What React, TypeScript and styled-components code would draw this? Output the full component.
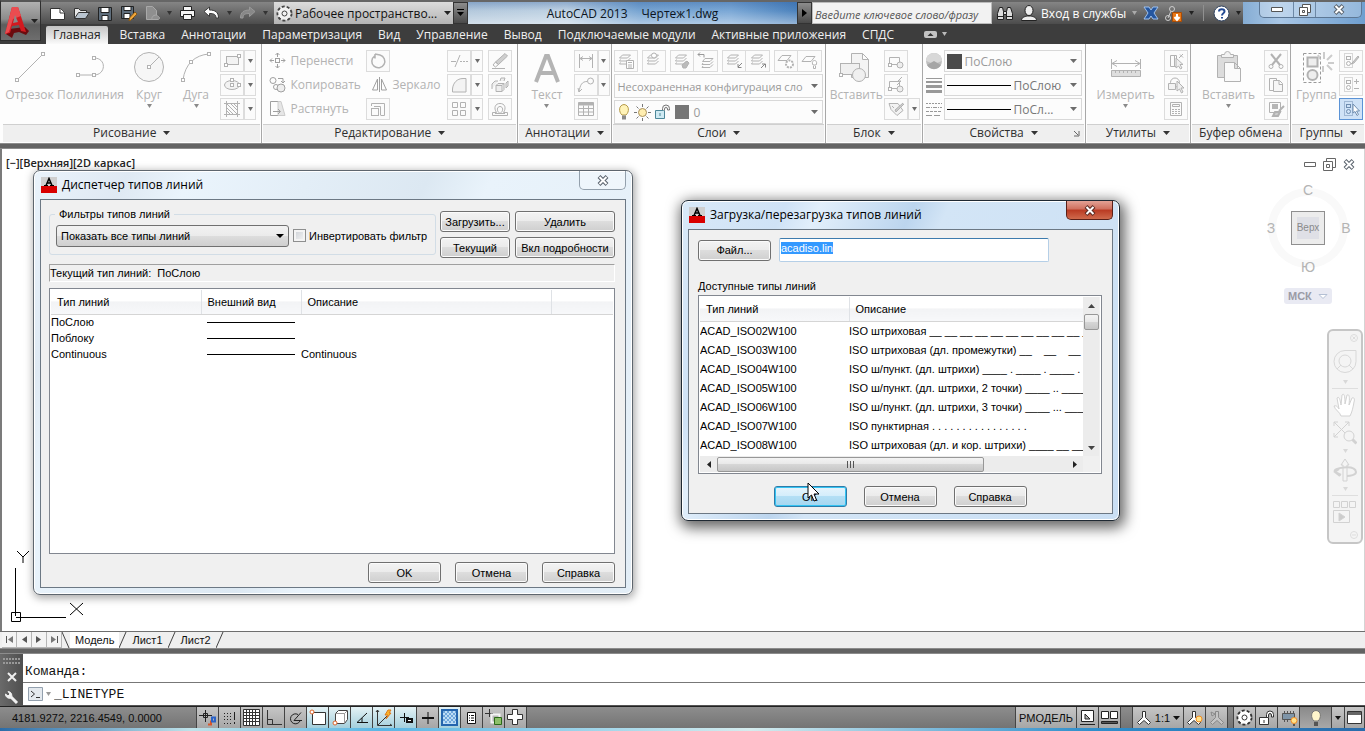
import React, { useEffect, useRef } from "react";
import styled, { createGlobalStyle, css } from "styled-components";

const uiFont = `"Open Sans", "Noto Sans", sans-serif`;
const dialogFont = `"Liberation Sans", Arial, sans-serif`;

const GlobalStyle = createGlobalStyle`
  *, *::before, *::after { box-sizing: border-box; }
  body { margin: 0; background: #fff; font-family: ${uiFont}; font-size: 12px; color: #2b2b2b; }
  button, input, select { font: inherit; color: inherit; margin: 0; border-radius: 0; }
  button { padding: 0; border: 0; background: none; }
  svg { display: block; flex: none; }
`;

/* ---------- drawing helpers ---------- */

type DrawProps = {
  w?: number;
  h?: number;
  color?: string;
  fill?: string;
  sw?: number;
  children: React.ReactNode;
};

const Draw = ({ w = 18, h = 18, color = "#b2b2b2", fill = "none", sw = 1, children }: DrawProps) => (
  <svg width={w} height={h} viewBox={`0 0 ${w} ${h}`} fill={fill} stroke={color} strokeWidth={sw} aria-hidden="true">
    {children}
  </svg>
);

const Arrow = ({ color = "#6c6c6c", w = 7 }: { color?: string; w?: number }) => (
  <svg width={w} height={4} viewBox="0 0 8 4" preserveAspectRatio="none" fill={color} aria-hidden="true">
    <path d="M0 0h8L4 4z" />
  </svg>
);

const node = (x: number, y: number) => <rect key={`${x}-${y}`} x={x - 1.5} y={y - 1.5} width="3" height="3" fill="#fff" />;

/* ---------- page frame ---------- */

const Page = styled.div`
  display: flex;
  flex-direction: column;
  min-height: 100vh;
  overflow: hidden;
`;

const Header = styled.header`
  display: flex;
  align-items: flex-start;
  height: 44px;
  background: #3d3d3d;
`;

const AppButton = styled.button`
  display: flex;
  align-items: center;
  justify-content: center;
  gap: 2px;
  width: 41px;
  height: 41px;
  border: 1px solid #2e2e2e;
  border-top: 2px solid #555;
  background: linear-gradient(#b0b0b0, #8c8c8c 45%, #5d5d5d 60%, #6e6e6e);
`;

const HeaderRows = styled.div`
  flex: 1;
  min-width: 0;
`;

const TitleBar = styled.div`
  display: flex;
  height: 24px;
  border-top: 2px solid #666;
  background: linear-gradient(#858585, #4c4c4c);
`;

const QuickAccess = styled.div`
  display: flex;
  align-items: center;
  gap: 7px;
  width: 233px;
  padding-left: 8px;
`;

const IconButton = styled.button`
  display: flex;
  align-items: center;
`;

const WorkspaceBox = styled.div`
  display: flex;
  align-items: center;
  gap: 2px;
  width: 179px;
  padding: 0 2px;
  background: linear-gradient(#dcdcdc, #b4b4b4);
  color: #111;
`;

const BareSelect = styled.select`
  flex: 1;
  min-width: 0;
  height: 100%;
  padding: 0;
  border: 0;
  outline: 0;
  appearance: none;
  background: transparent;
  overflow: hidden;
  text-overflow: clip;
`;

const DarkStub = styled.button`
  display: flex;
  align-items: center;
  justify-content: center;
  width: 15px;
  border: 1px solid #333;
  background: linear-gradient(#8c8c8c, #4a4a4a);
`;

const Glass = styled.div`
  display: flex;
  align-items: center;
  justify-content: center;
  flex: 1;
  gap: 14px;
  color: #0c1420;
  background:
    linear-gradient(rgba(30, 80, 150, 0.3), rgba(255, 255, 255, 0) 40%, rgba(255, 255, 255, 0.4)),
    linear-gradient(90deg, #b4c9dc, #c0d3e4 30%, #78a5d2 52%, #7ba8d6 80%, #4d83bd);
`;

const SearchInput = styled.input`
  width: 180px;
  padding: 3px 2px 0;
  border: 1px solid #bbb;
  outline: 0;
  background: #f2f2f2;
  font-size: 11px;
  font-style: italic;
  &::placeholder { color: #555; opacity: 1; }
`;

const InfoBar = styled.div`
  display: flex;
  align-items: center;
  gap: 6px;
  width: 251px;
  padding-left: 4px;
  color: #fff;
  white-space: nowrap;
`;

const VRule = styled.span`
  width: 1px;
  height: 16px;
  margin: 0 3px;
  background: #909090;
`;

const WindowGlass = styled.div`
  width: 122px;
  padding: 0 3px 5px 16px;
  background: linear-gradient(90deg, #86add4, #a9c7e6 30%, #6f9fd0);
`;

const WindowButtons = styled.div`
  display: flex;
  height: 16px;
  border: 1px solid #5d7896;
  border-top: 0;
  border-radius: 0 0 5px 5px;
  background: rgba(255, 255, 255, 0.25);
`;

const WindowButton = styled.button<{ $grow: number }>`
  display: flex;
  flex: ${(p) => p.$grow} 1 0;
  align-items: center;
  justify-content: center;
  & + & { border-left: 1px solid #6d88a6; }
`;

/* ---------- ribbon tabs ---------- */

const Tabs = styled.nav`
  display: flex;
  align-items: center;
  height: 20px;
  padding-left: 5px;
  color: #f0f0f0;
`;

const Tab = styled.button<{ $active?: boolean }>`
  height: 20px;
  padding: 1px 8px 0;
  line-height: 18px;
  white-space: nowrap;
  border-radius: 2px 2px 0 0;
  ${(p) =>
    p.$active &&
    css`
      height: 18px;
      padding: 0 7px;
      margin: 2px 4px 0 0;
      line-height: 16px;
      color: #222;
      background: linear-gradient(#c4c4c4, #fafafa);
    `}
`;

const TabExtras = styled.button`
  display: flex;
  align-items: center;
  gap: 5px;
  margin-left: 22px;
`;

/* ---------- ribbon ---------- */

const Ribbon = styled.section`
  display: flex;
  height: 99px;
  padding-left: 2px;
  background: #fdfdfd;
`;

const PanelBox = styled.div<{ $grow: number }>`
  display: flex;
  flex-direction: column;
  flex: ${(p) => p.$grow} 1 0;
  min-width: 0;
  border-right: 1px solid #a8a8a8;
  &:last-child { border-right: 0; }
`;

const PanelBody = styled.div`
  display: flex;
  flex: 1;
  padding: 6px 0 0 2px;
  color: #b3b3b3;
`;

const PanelTitle = styled.button`
  display: flex;
  align-items: center;
  justify-content: center;
  gap: 7px;
  height: 18px;
  margin: 0 1px 1px;
  padding-bottom: 2px;
  border-top: 1px solid #cfcfcf;
  background: #efefef;
  color: #2e2e2e;
  white-space: nowrap;
  position: relative;
`;

const Launcher = styled.span`
  position: absolute;
  right: 4px;
  top: 5px;
`;

const BigButton = styled.button<{ $w: number }>`
  display: flex;
  flex-direction: column;
  align-items: center;
  width: ${(p) => p.$w}px;
  height: 62px;
  line-height: 18px;
  white-space: nowrap;
`;

const BigLabel = styled.span`
  display: flex;
  justify-content: center;
  width: 0;
`;

const SmallColumn = styled.div<{ $w?: number }>`
  display: flex;
  flex-direction: column;
  gap: 2px;
  width: ${(p) => (p.$w ? `${p.$w}px` : "auto")};
`;

const SmallRow = styled.div<{ $gap?: number }>`
  display: flex;
  align-items: center;
  gap: ${(p) => p.$gap ?? 0}px;
  height: 22px;
`;

const ToolButton = styled.button<{ $on?: boolean; $w?: number }>`
  display: flex;
  align-items: center;
  justify-content: center;
  width: ${(p) => p.$w ?? 24}px;
  height: 22px;
  border: 1px solid ${(p) => (p.$on ? "#5b93d6" : "#dcdcdc")};
  background: ${(p) => (p.$on ? "#cfe2f7" : "#fbfbfb")};
  & + &[data-joined] { border-left: 0; }
`;

const TextTool = styled.button`
  display: flex;
  align-items: center;
  gap: 4px;
  height: 22px;
  padding: 0 0 2px 5px;
  white-space: nowrap;
`;

const Combo = styled.div<{ $color?: string; $small?: boolean }>`
  display: flex;
  align-items: center;
  gap: 3px;
  flex: 1;
  min-width: 0;
  height: 22px;
  padding: 0 4px 0 2px;
  border: 1px solid #d8d8d8;
  background: #fcfcfc;
  color: ${(p) => p.$color ?? "#9a9a9a"};
  font-size: ${(p) => (p.$small ? 11 : 12)}px;
`;

const Swatch = styled.span`
  width: 15px;
  height: 15px;
  background: #4b4b4b;
`;

const LineSample = styled.span<{ $w: number }>`
  width: ${(p) => p.$w}px;
  height: 1px;
  background: #000;
`;

const DarkBar = styled.div`
  height: 6px;
  border-top: 1px solid #8c8c8c;
  border-bottom: 1px solid #8c8c8c;
  background: #636363;
`;

const Panel = ({
  title,
  grow,
  menu = true,
  launcher,
  children,
}: {
  title: string;
  grow: number;
  menu?: boolean;
  launcher?: boolean;
  children: React.ReactNode;
}) => (
  <PanelBox $grow={grow}>
    <PanelBody>{children}</PanelBody>
    <PanelTitle>
      {title}
      {menu && <Arrow color="#333" />}
      {launcher && (
        <Launcher>
          <Draw w={7} h={7} color="#666">
            <path d="M1 1l4 4M6 1v5h-5" />
          </Draw>
        </Launcher>
      )}
    </PanelTitle>
  </PanelBox>
);

const Big = ({ label, w, arrow, children }: { label: string; w: number; arrow?: boolean; children: React.ReactNode }) => (
  <BigButton $w={w}>
    {children}
    <BigLabel>{label}</BigLabel>
    {arrow && <Arrow color="#8a8a8a" w={5} />}
  </BigButton>
);

const Split = ({ label, children }: { label: string; children: React.ReactNode }) => (
  <SmallRow>
    <ToolButton aria-label={label}>{children}</ToolButton>
    <ToolButton data-joined $w={12} aria-label={`${label}: меню`}>
      <Arrow w={5} />
    </ToolButton>
  </SmallRow>
);

/* ---------- ribbon drawings ---------- */

const LineIcon = () => (
  <Draw w={36} h={36}>
    <path d="M5 30L31 4" />
    {node(5, 30)}
    {node(31, 4)}
  </Draw>
);
const PolylineIcon = () => (
  <Draw w={36} h={36}>
    <path d="M5 25h16c12 0 13-17 0-17" />
    {node(5, 25)}
    {node(21, 25)}
    {node(21, 8)}
  </Draw>
);
const CircleIcon = () => (
  <Draw w={36} h={36}>
    <circle cx="18" cy="17" r="14.5" fill="#f6f6f6" />
    <path d="M18 17L28 7" />
    {node(18, 17)}
  </Draw>
);
const ArcIcon = () => (
  <Draw w={36} h={36}>
    <path d="M5 30C7 14 17 5 31 4" />
    {node(5, 30)}
    {node(13, 12)}
    {node(31, 4)}
  </Draw>
);
const RectIcon = () => (
  <Draw>
    <rect x="3.5" y="4.5" width="12" height="8" fill="#f3f3f3" />
    {node(3, 13)}
    {node(16, 4)}
  </Draw>
);
const EllipseIcon = () => (
  <Draw>
    <ellipse cx="9" cy="9" rx="7.5" ry="4.5" fill="#f3f3f3" />
    {node(9, 9)}
    {node(16, 9)}
    {node(9, 4)}
  </Draw>
);
const HatchIcon = () => (
  <Draw>
    <path d="M1 3.500h16M3.500 1v16M1 14.500h16M14.500 1v16" />
    <path d="M4 4l10 10M8 4l6 6M4 8l6 6M11 4l3 3M4 11l3 3" />
  </Draw>
);
const MoveIcon = () => (
  <Draw w={17} h={17} color="#a0a0a0">
    <rect x="6.500" y="6.500" width="4" height="4" />
    <path d="M8.500 5V1M6.500 3l2-2 2 2M8.500 12v4M6.500 14l2 2 2-2M5 8.500H1M3 6.500l-2 2 2 2M12 8.500h4M14 6.500l2 2-2 2" />
  </Draw>
);
const CopyIcon = () => (
  <Draw w={17} h={17} color="#a0a0a0">
    <circle cx="4" cy="4.500" r="3" />
    <circle cx="7" cy="11" r="2.500" />
    <circle cx="12" cy="12" r="4" fill="#eee" />
    <path d="M9 2.500h5v4M12 5l2 2 2-2" />
  </Draw>
);
const StretchIcon = () => (
  <Draw w={17} h={17} color="#a0a0a0">
    <path d="M9 1.500H1.500v14H9" />
    <path d="M9 1.500h3l4 14H9z" fill="#e6e6e6" stroke="#ccc" />
    <path d="M4 11.500h7M9 9l2.500 2.500L9 14" />
  </Draw>
);
const RotateIcon = () => (
  <Draw>
    <path d="M5.500 4A6.500 6.500 0 1 0 11 3M11 3L6 2M6 2v4.500" strokeWidth="1.500" />
  </Draw>
);
const MirrorIcon = () => (
  <Draw w={17} h={17} color="#a0a0a0">
    <path d="M6.500 3v11h-5zM10.500 3v11h5zM8.500 1v15" />
  </Draw>
);
const ScaleIcon = () => (
  <Draw>
    <rect x="2.500" y="8.500" width="7" height="7" />
    <path d="M2.500 6V3.500h13v12H12M5 6.500h6.500v9" />
  </Draw>
);
const TrimIcon = () => (
  <Draw>
    <path d="M1 9.500h5M5 15L10 3M10 9.500h2M13 9.500h2M16 9.500h2" />
  </Draw>
);
const FilletIcon = () => (
  <Draw>
    <path d="M2.500 16V13C3 7 7 2.500 13 2.500h3v13.500z" fill="#f3f3f3" />
  </Draw>
);
const ArrayIcon = () => (
  <Draw>
    <path d="M2.500 2.500h5v5h-5zM10.500 2.500h5v5h-5zM2.500 10.500h5v5h-5zM10.500 10.500h5v5h-5z" />
  </Draw>
);
const EraseIcon = () => (
  <Draw>
    <path d="M14 1.500l2.500 2.500-9 8.500-3-2.500z" fill="#cfcfcf" />
    <path d="M4.500 10l3 2.500-3 2.500-2.500-2z" />
    <path d="M1 16.500h13" />
  </Draw>
);
const ExplodeIcon = () => (
  <Draw>
    <path d="M5 9.500h6v6H5zM5 9.500l2-2h6l-2 2M13 7.500v6l-2 2M1 13V8l3-3h3M9 5l1-3h4l-1 3M15 12V7l2-2v5z" fill="#eee" />
  </Draw>
);
const OffsetIcon = () => (
  <Draw>
    <path d="M1.500 15.500v-3h4C2.500 8 4 3.500 9 3.500S15.500 8 12.500 12.500h4v3z" />
    <path d="M4 13.500h5C5 11 6 6.500 9 6.500s4 4.500 0 7h5" />
  </Draw>
);
const DimIcon = () => (
  <Draw>
    <path d="M2.500 2v14M15.500 2v14M3 6.500h12M6 4.500l-3 2 3 2M12 4.500l3 2-3 2" />
  </Draw>
);
const LeaderIcon = () => (
  <Draw>
    <path d="M2 16C3 9 5 5.500 10 5.500M1 12l1 4 3-3" />
    <circle cx="13.500" cy="5" r="3" />
  </Draw>
);
const TableIcon = () => (
  <Draw>
    <path d="M1.500 2.500h15v13h-15zM1.500 8.500h15M1.500 12h15M6.500 5.500v10M11.500 5.500v10" />
    <path d="M1.500 4h15" strokeWidth="3" />
  </Draw>
);
const TextIcon = () => (
  <Draw w={36} h={36} color="#b4b4b4">
    <path d="M7 32L17 6h2l10 26M11 23h14" strokeWidth="4" />
  </Draw>
);

const Layers = ({ extra }: { extra?: React.ReactNode }) => (
  <Draw>
    <path d="M5.500 3h8l-3 3h-8zM3.500 7.500L2.500 9h8l3-3M3.500 10.500L2.500 12h8l3-3" />
    {extra}
  </Draw>
);
const BigInsertIcon = () => (
  <Draw w={36} h={36}>
    <path d="M13.500 3.500h11l6 6v18H13.500zM24.500 3.500v6h6" fill="#f4f4f4" />
    <rect x="2.500" y="13.500" width="19" height="11" fill="#f0f0f0" />
    <circle cx="21" cy="25" r="6.500" fill="#f0f0f0" />
    {node(3, 25)}
  </Draw>
);
const BlockIcon = ({ extra }: { extra?: React.ReactNode }) => (
  <Draw>
    <path d="M2.500 5.500h10v7h-10z" />
    <circle cx="13" cy="13" r="3" fill="#eee" />
    {node(3, 13)}
    {extra}
  </Draw>
);
const MeasureIcon = () => (
  <Draw w={36} h={36}>
    <path d="M3.500 9v10M32.500 9v10M4 13.500h28M9 10.500l-5 3 5 3M27 10.500l5 3-5 3" />
    <path d="M3.500 20.500h29v6h-29z" fill="#dedede" />
    <path d="M7.500 20v3M11.500 20v3M15.500 20v3M19.500 20v3M23.500 20v3M27.500 20v3" />
  </Draw>
);
const PasteIcon = () => (
  <Draw w={36} h={36}>
    <path d="M6.500 5.500h20v22h-20z" fill="#dcdcdc" />
    <path d="M10.500 7.500v-3h3a3 3 0 0 1 6 0h3v3z" fill="#f2f2f2" />
    <path d="M13.500 12.500h10l6 6v13h-16zM23.500 12.500v6h6" fill="#fafafa" />
  </Draw>
);
const GroupIcon = () => (
  <Draw w={36} h={36}>
    <path d="M5.500 3.500h17v29h-17z" strokeDasharray="3 2" stroke="#999" />
    <rect x="9.500" y="7.500" width="10" height="9" strokeWidth="2" fill="#eee" />
    <circle cx="14.500" cy="25" r="5" strokeWidth="2" fill="#eee" />
    <path d="M26 9V2M29 10l5-5M30 13h6M29 15l5 5M25 16v6M22 9l-2-4" stroke="#ccc" strokeWidth="2" />
  </Draw>
);
const SelectIcon = () => (
  <Draw>
    <path d="M3.500 3.500h6v11h-6zM7.500 3.500v11M12 6l4-4M13 2.500l3 3" />
    <path d="M9 6v10l2.500-2 2 3 1.500-1-2-3.500h3z" fill="#eee" />
  </Draw>
);
const CalcIcon = () => (
  <Draw>
    <path d="M3.500 2.500h11v13h-11zM5.500 4.500h7v2h-7z" />
    <path d="M5 9.500h8M5 11.500h8M5 13.500h8" strokeDasharray="2 1" />
  </Draw>
);
const CutIcon = () => (
  <Draw>
    <path d="M4 2l9 11M14 2L5 13" strokeWidth="2" />
    <circle cx="4" cy="14.500" r="2" />
    <circle cx="14" cy="14.500" r="2" />
  </Draw>
);
const CopyPageIcon = () => (
  <Draw>
    <path d="M2.500 2.500h7v12h-7z" />
    <path d="M6.500 4.500h6l3 3v8h-9zM12 4.500v4h4" fill="#f6f6f6" />
  </Draw>
);
const MatchIcon = () => (
  <Draw>
    <path d="M2.500 2.500h11v10h-11z" />
    <rect x="5" y="4" width="6" height="5" fill="#b5b5b5" stroke="none" />
    <path d="M17 6l-5 5M8 12h5l-2 4H6z" fill="#ccc" strokeWidth="2" />
  </Draw>
);
const GroupSmall = ({ extra, color }: { extra: React.ReactNode; color?: string }) => (
  <Draw color={color}>
    <path d="M2.500 1.500h8v14h-8z" strokeDasharray="1 1" />
    <rect x="4.500" y="4.500" width="4" height="3" />
    <circle cx="6.500" cy="11.500" r="2" />
    {extra}
  </Draw>
);
const BulbIcon = () => (
  <Draw w={14} h={18} color="#b59a4a">
    <path d="M5 12C1.500 9 1.500 2 7 1.500 12.500 2 12.500 9 9 12z" fill="#fff3b8" />
    <path d="M5 13.500h4M5 15.500h4" stroke="#8a8a8a" strokeWidth="2" />
  </Draw>
);
const SunIcon = () => (
  <Draw w={17} h={17} color="#777">
    <path d="M8.500 0v3M8.500 14v3M0 8.500h3M14 8.500h3M2.500 2.500l2 2M12.500 12.500l2 2M14.500 2.500l-2 2M4.500 12.500l-2 2" />
    <circle cx="8.500" cy="8.500" r="4" fill="#ffeeb0" stroke="#a9905a" />
  </Draw>
);
const LockIcon = () => (
  <Draw w={17} h={16} color="#4d8799">
    <path d="M1.500 6.500h9v8h-9z" fill="#cfeaf3" />
    <path d="M8.500 6V4.500a3.500 3.500 0 0 1 7 0V6h-2V5a1.500 1.500 0 0 0-3 0v1.500" fill="#f4f4f4" stroke="#777" />
    <path d="M6 9v3" />
  </Draw>
);

/* ---------- drawing area ---------- */

const Canvas = styled.main`
  position: relative;
  flex: 1;
  min-height: 482px;
  border-left: 2px solid #7b7b7b;
  border-right: 1px solid #d4d4d4;
  background: #fff;
`;

const ViewLabel = styled.div`
  padding: 7px 4px;
  font-size: 11px;
  font-weight: 600;
  line-height: 14px;
  color: #222;
`;

const ViewTools = styled.div`
  position: absolute;
  top: 7px;
  right: 0;
  width: 104px;
`;

const ViewControls = styled.div`
  display: flex;
  align-items: center;
  justify-content: flex-end;
  gap: 7px;
  height: 17px;
  padding-right: 9px;
`;

const CubeWrap = styled.div`
  width: 90px;
  height: 94px;
  margin-top: 8px;
`;

const WcsButton = styled.button`
  display: flex;
  align-items: center;
  gap: 6px;
  height: 16px;
  margin: 13px 0 25px 24px;
  padding: 0 4px;
  border-radius: 3px;
  background: #e9eaf3;
  color: #9b9ba6;
  font: 600 11px/16px ${dialogFont};
`;

const NavBar = styled.div`
  display: flex;
  flex-direction: column;
  align-items: center;
  gap: 4px;
  width: 36px;
  height: 215px;
  margin-left: 67px;
  padding: 3px 3px;
  border: 2px solid #c6c6c6;
  border-radius: 6px;
  background: #f4f4f4;
`;

const NavRule = styled.span`
  width: 26px;
  height: 1px;
  flex: none;
  background: #dedede;
`;

const NavEnd = styled.button<{ $last?: boolean }>`
  align-self: flex-end;
  margin-top: ${(p) => (p.$last ? "auto" : "0")};
`;

const UcsMark = styled.div`
  position: absolute;
  left: 8px;
  bottom: 8px;
`;

/* ---------- dialogs ---------- */

const Dialog = styled.section<{ $x: number; $y: number; $w: number; $active?: boolean }>`
  position: absolute;
  left: ${(p) => p.$x}px;
  top: ${(p) => p.$y}px;
  width: ${(p) => p.$w}px;
  padding: 0 6px 6px;
  border: 1px solid ${(p) => (p.$active ? "#1f2933" : "#5e666e")};
  border-radius: 7px;
  color: #000;
  font: 11px/14px ${dialogFont};
  background: ${(p) =>
    p.$active
      ? "linear-gradient(115deg, #d9e9f8 0, #cfe2f6 18%, #e2effb 24%, #bcd5ee 40%, #d3e5f6 46%, #cadff4)"
      : "linear-gradient(115deg, #eaf3fb 0, #dfe9f3 12%, #eaf4fc 20%, #dce8f2 50%, #e9f3fb 58%, #e2edf6)"};
  box-shadow:
    inset 0 0 0 1px #fff,
    ${(p) => (p.$active ? "2px 4px 14px 3px rgba(0,0,0,.6)" : "1px 2px 8px 1px rgba(0,0,0,.35)")};
`;

const DialogHead = styled.div`
  display: flex;
  align-items: flex-start;
  justify-content: space-between;
  height: 28px;
`;

const DialogTitle = styled.h2`
  display: flex;
  align-items: center;
  gap: 5px;
  margin: 6px 0 0 1px;
  font: 12px/16px ${uiFont};
  white-space: nowrap;
`;

const CloseButton = styled.button<{ $red?: boolean }>`
  display: flex;
  align-items: center;
  justify-content: center;
  width: 47px;
  height: 19px;
  border: 1px solid ${(p) => (p.$red ? "#5a2018" : "#93a0ac")};
  border-top: 0;
  border-radius: 0 0 5px 5px;
  background: ${(p) => (p.$red ? "linear-gradient(#e3a295, #cf6f5d 45%, #b93a22 50%, #cf6a4c)" : "rgba(255,255,255,.35)")};
`;

const DialogBody = styled.div<{ $pad: string }>`
  display: flex;
  flex-direction: column;
  padding: ${(p) => p.$pad};
  border: 1px solid #6c7884;
  background: #f0f0f0;
`;

const DialogButton = styled.button<{ $w?: number; $hot?: boolean }>`
  width: ${(p) => p.$w ?? 73}px;
  height: 21px;
  border: 1px solid ${(p) => (p.$hot ? "#2f7ba8" : "#707070")};
  border-radius: 3px;
  background: ${(p) =>
    p.$hot ? "linear-gradient(#e6f4fc, #d3edfb 48%, #b3dff5 50%, #a5d6f0)" : "linear-gradient(#f3f3f3, #ebebeb 48%, #dddddd 50%, #cfcfcf)"};
  box-shadow: inset 0 0 0 1px ${(p) => (p.$hot ? "#33c4f3" : "#fbfbfb")};
  white-space: nowrap;
`;

const FilterRow = styled.div`
  display: flex;
  align-items: flex-start;
  gap: 4px;
`;

const Fieldset = styled.fieldset`
  display: flex;
  align-items: center;
  gap: 4px;
  flex: 1;
  height: 48px;
  margin: -4px 0 0;
  padding: 0 6px 4px;
  border: 1px solid #d2dde6;
  border-radius: 3px;
`;

const Legend = styled.legend`
  margin-left: -1px;
  padding: 0 4px;
`;

const DialogSelectBox = styled.div`
  display: flex;
  align-items: center;
  width: 233px;
  height: 22px;
  padding: 0 4px;
  border: 1px solid #707070;
  border-radius: 3px;
  background: linear-gradient(#f2f2f2, #ebebeb 48%, #dddddd 50%, #cfcfcf);
`;

const CheckLabel = styled.label`
  display: flex;
  align-items: center;
  gap: 3px;
  white-space: nowrap;
`;

const CheckBox = styled.input`
  width: 13px;
  height: 13px;
  appearance: none;
  border: 1px solid #8e8f8f;
  background: linear-gradient(135deg, #cbcfd5, #f6f6f6);
  box-shadow: inset 0 0 0 2px #f4f4f4;
`;

const ButtonGrid = styled.div`
  display: grid;
  grid-template-columns: 70px 100px;
  gap: 5px;
`;

const CurrentLine = styled.div`
  height: 18px;
  margin: 6px 0;
  padding-top: 1px;
  border: 1px solid #fff;
  border-top-color: #a0a0a0;
  border-left-color: #a0a0a0;
`;

const ListFrame = styled.div<{ $h: number }>`
  height: ${(p) => p.$h}px;
  padding: 1px;
  border: 1px solid #828790;
  background: #fff;
`;

const Table = styled.table<{ $row: number }>`
  width: 100%;
  table-layout: fixed;
  border-collapse: collapse;
  th {
    height: 24px;
    padding: 1px 0 0 6px;
    font-weight: normal;
    text-align: left;
    border-right: 1px solid #dfe2e6;
    border-bottom: 1px solid #d5d5d5;
    background: linear-gradient(#fff 45%, #f2f3f5 50%, #f7f8fa);
  }
  th:last-child { border-right: 0; }
  td {
    height: ${(p) => p.$row}px;
    padding: 0;
    overflow: hidden;
    white-space: pre;
  }
`;

const SampleLine = styled.span`
  display: block;
  width: 88px;
  height: 1px;
  margin-left: 6px;
  background: #000;
`;

const ButtonRow = styled.div<{ $gap: number; $justify: string; $top: number }>`
  display: flex;
  justify-content: ${(p) => p.$justify};
  gap: ${(p) => p.$gap}px;
  margin-top: ${(p) => p.$top}px;
`;

const FileRow = styled.div`
  display: flex;
  align-items: center;
  gap: 8px;
`;

const FileInput = styled.input`
  width: 270px;
  height: 24px;
  padding: 2px 1px 7px;
  border: 1px solid #b5cfe7;
  border-top-color: #3d7bad;
  border-radius: 2px;
  outline: 0;
  background: #fff;
  line-height: 13px;
  &::selection { background: #3399ff; color: #fff; }
`;

const ListLabel = styled.div`
  margin: 17px 0 2px;
`;

const ScrollGrid = styled.div`
  display: grid;
  grid-template-columns: minmax(0, 1fr) 16px;
  grid-template-rows: 159px 16px;
  padding-right: 1px;
  background: #f0f0f0;
`;

const ScrollView = styled.div`
  overflow: hidden;
  background: #fff;
`;

const VScroll = styled.div`
  display: flex;
  flex-direction: column;
  align-items: center;
  background: #ececec;
`;

const HScroll = styled.div`
  display: flex;
  align-items: center;
  background: #ececec;
`;

const ScrollArrow = styled.button<{ $push?: boolean }>`
  display: flex;
  flex: none;
  align-items: center;
  justify-content: center;
  width: 17px;
  height: 17px;
  margin: ${(p) => (p.$push ? "auto 0 0 auto" : "0")};
`;

const Thumb = styled.div<{ $w: number; $h: number }>`
  display: flex;
  flex: none;
  align-items: center;
  justify-content: center;
  width: ${(p) => p.$w}px;
  height: ${(p) => p.$h}px;
  border: 1px solid #979797;
  border-radius: 2px;
  background: linear-gradient(#f3f3f3, #e8e8e8 48%, #d6d6d6 50%, #c6c6c6);
`;

const Cursor = styled.div`
  position: absolute;
  left: 125px;
  top: 281px;
`;

/* ---------- sheet tabs, command line, status bar ---------- */

const SheetBar = styled.div`
  display: flex;
  height: 17px;
  padding-left: 2px;
  border-top: 1px solid #6e6e6e;
  background: #efefef;
  color: #111;
  font: 11px/16px ${dialogFont};
`;

const SheetNav = styled.button`
  display: flex;
  align-items: center;
  justify-content: center;
  width: 15px;
  border: 1px solid #b5b5b5;
  border-width: 0 1px 1px 0;
  background: #f3f3f3;
`;

const SheetTab = styled.button<{ $active?: boolean }>`
  height: 16px;
  padding: 0 5px;
  background: ${(p) => (p.$active ? "#fff" : "transparent")};
`;

const CommandArea = styled.section`
  display: flex;
  height: 52px;
  background: #fff;
`;

const CommandGrip = styled.div`
  display: flex;
  flex-direction: column;
  align-items: center;
  justify-content: space-between;
  width: 23px;
  padding: 4px 0 1px;
  background: linear-gradient(90deg, #6a6a6a, #4f4f4f);
`;

const CommandRows = styled.div`
  flex: 1;
  color: #111;
  font: 13px/16px "Liberation Mono", "Courier New", monospace;
`;

const CommandLog = styled.div`
  height: 29px;
  padding: 10px 2px 0;
  border-bottom: 1px solid #777;
`;

const CommandLine = styled.label`
  display: flex;
  align-items: center;
  gap: 3px;
  height: 23px;
  padding-left: 5px;
  border-bottom: 1px solid #555;
`;

const CommandInput = styled.input`
  flex: 1;
  height: 18px;
  padding: 0;
  border: 0;
  outline: 0;
  background: transparent;
`;

const StatusBar = styled.footer`
  display: flex;
  height: 22px;
  border-top: 1px solid #222;
  background: linear-gradient(#8d8d8d, #747474);
  color: #0c0c0c;
  font: 11px/20px ${dialogFont};
`;

const Coords = styled.div`
  width: 197px;
  padding-left: 12px;
  padding-top: 1px;
  border-right: 1px solid #444;
`;

const StatusButton = styled.button<{ $on?: boolean; $w?: number; $pressed?: boolean }>`
  display: flex;
  flex: none;
  align-items: center;
  justify-content: center;
  gap: 3px;
  width: ${(p) => p.$w ?? 22}px;
  border-right: 1px solid #444;
  white-space: nowrap;
  background: ${(p) =>
    p.$on ? "linear-gradient(#e4f2f5, #a4cfdc)" : p.$pressed ? "linear-gradient(#8a8a8a, #a8a8a8)" : "linear-gradient(#c6c6c6, #a6a6a6)"};
`;

const StatusSpacer = styled.span`
  flex: 1;
`;

const StatusGap = styled.span<{ $w: number }>`
  width: ${(p) => p.$w}px;
  border-right: 1px solid #444;
`;

const TaskStrip = styled.div`
  height: 3px;
  background: linear-gradient(90deg, #2b6ca8, #bfe3ea 14%, #59b6e4 28%, #d5ecee 55%, #2f8ecb 80%, #2a6cab);
`;

const AppLogo = () => (
  <svg width="16" height="16" viewBox="0 0 16 16" aria-hidden="true">
    <path fill="#cfcfcf" d="M0 0h16v16H0z" />
    <path fill="#d90000" d="M0 9h16v7H0z" />
    <path d="M5 8.500L8 1.500 11 8.500M6 6h4" stroke="#000" strokeWidth="1.500" fill="none" />
    <path d="M3 8.500h4M9 8.500h4" stroke="#000" />
  </svg>
);

const CloseX = ({ light }: { light?: boolean }) => (
  <svg width="12" height="11" viewBox="0 0 12 11" fill="none" aria-hidden="true">
    <path d="M2 1.500l8 8M10 1.500l-8 8" stroke={light ? "#5b2a22" : "#59626c"} strokeWidth="4" />
    <path d="M2.500 2l7 7M9.500 2l-7 7" stroke="#fff" strokeWidth="2" />
  </svg>
);

const lineTypes: [string, string][] = [
  ["ACAD_ISO02W100", "ISO штриховая __ __ __ __ __ __ __ __ __ __ __ __ __"],
  ["ACAD_ISO03W100", "ISO штриховая (дл. промежутки) __    __    __"],
  ["ACAD_ISO04W100", "ISO ш/пункт. (дл. штрихи) ____ . ____ . ____ ."],
  ["ACAD_ISO05W100", "ISO ш/пункт. (дл. штрихи, 2 точки) ____ .. ____"],
  ["ACAD_ISO06W100", "ISO ш/пункт. (дл. штрихи, 3 точки) ____ ... ___"],
  ["ACAD_ISO07W100", "ISO пунктирная . . . . . . . . . . . . . . . ."],
  ["ACAD_ISO08W100", "ISO штриховая (дл. и кор. штрихи) ____ __ ____"],
];

const TopBar = () => (
  <Header>
    <AppButton aria-label="Меню приложения">
      <svg width="25" height="33" viewBox="0 0 25 33" aria-hidden="true">
        <path d="M2 29l3-5 16-2 4 4-3 4-7-3-5 1-2 5z" fill="#6b0b0e" />
        <path d="M8 2h6l8 25-5-1-2-6-7 1-2 7-5 1z" fill="#d3191f" />
        <path d="M8 2h6l3 9-8 3-4 13-4 2z" fill="#ea4c50" />
        <path d="M11 10l3 7-5 1z" fill="#8a8a8a" />
      </svg>
      <Arrow color="#222" w={7} />
    </AppButton>
    <HeaderRows>
      <TitleBar>
        <QuickAccess>
          <IconButton aria-label="Создать">
            <Draw w={17} h={15} color="#333" fill="#fff">
              <path d="M1.500 2.500h10l4 4v7h-14z" />
              <path d="M11 2.500v4.500h4.500" />
            </Draw>
          </IconButton>
          <IconButton aria-label="Открыть">
            <Draw w={17} h={15} color="#333" fill="#e8e8e8">
              <path d="M1.500 12.500v-10h4l2 2h6v3" />
              <path d="M1.500 12.500l4-6h11l-4 6z" fill="#b9c4cf" />
            </Draw>
          </IconButton>
          <IconButton aria-label="Сохранить">
            <Draw w={16} h={15} color="#222" fill="#5f6e7c">
              <path d="M1.500 1.500h13v13h-13z" />
              <path d="M4 1.500h8v5H4zM5 9.500h6v5H5z" fill="#fff" />
            </Draw>
          </IconButton>
          <IconButton aria-label="Сохранить как">
            <Draw w={17} h={16} color="#222" fill="#5f6e7c">
              <path d="M1.500 1.500h12v12h-12z" />
              <path d="M4 1.500h7v4H4zM4 8.500h6v5H4z" fill="#fff" />
              <path d="M15 7l2 2-6 6-2 1 .5-3z" fill="#f0a63c" stroke="#8a5a14" />
            </Draw>
          </IconButton>
          <IconButton aria-label="Печать в облако">
            <Draw w={16} h={16} color="#a9a9a9" fill="#8f8f8f">
              <path d="M2.500 1.500h6l4 4v9h-10z" />
              <path d="M8 14.500c-1-4 5-6 6-3 2 0 2 3 0 3z" />
            </Draw>
          </IconButton>
          <Arrow color="#333" w={5} />
          <IconButton aria-label="Печать">
            <Draw w={17} h={16} color="#222" fill="#f5f5f5">
              <path d="M4.500 1.500h8v4h-8z" />
              <path d="M1.500 5.500h14v6h-14z" />
              <path d="M4.500 9.500h8v5h-8z" />
            </Draw>
          </IconButton>
          <IconButton aria-label="Отменить">
            <Draw w={17} h={14} color="#3a3a3a" fill="#fff">
              <path d="M1 5.500L6.500 1v3C12 4 15.500 6 15.500 12h-2.500C13 8.500 11 7.500 6.500 7.500v3z" />
            </Draw>
          </IconButton>
          <Arrow color="#333" w={5} />
          <IconButton aria-label="Повторить">
            <Draw w={17} h={14} color="#999" fill="#888">
              <path d="M16 5.500L10.500 1v3C5 4 1.500 6 1.500 12H4c0-3.500 2-4.500 6.500-4.500v3z" />
            </Draw>
          </IconButton>
          <Arrow color="#333" w={5} />
        </QuickAccess>
        <WorkspaceBox>
          <Draw w={17} h={17} color="#444">
            <circle cx="8.500" cy="8.500" r="7" fill="#f2f2f2" strokeWidth="2" strokeDasharray="3 2" />
            <circle cx="8.500" cy="8.500" r="5.500" fill="#f2f2f2" stroke="#f2f2f2" />
            <circle cx="8.500" cy="8.500" r="2.500" />
          </Draw>
          <BareSelect aria-label="Рабочее пространство">
            <option>Рабочее пространство...</option>
          </BareSelect>
          <Arrow color="#222" />
        </WorkspaceBox>
        <DarkStub aria-label="Настройка панели">
          <Draw w={7} h={8} color="#000" fill="#000">
            <path d="M0 .5h7" />
            <path d="M0 3h7L3.500 7z" stroke="none" />
          </Draw>
        </DarkStub>
        <Glass>
          <span>AutoCAD 2013</span>
          <span>Чертеж1.dwg</span>
        </Glass>
        <DarkStub aria-label="Развернуть поиск">
          <Draw w={5} h={8} color="none" fill="#000">
            <path d="M0 0l5 4-5 4z" />
          </Draw>
        </DarkStub>
        <SearchInput aria-label="Поиск" placeholder="Введите ключевое слово/фразу" />
        <InfoBar>
          <IconButton aria-label="Найти">
            <Draw w={18} h={16} color="#222" fill="#ddd">
              <path d="M1.500 14.500v-6l2-6h3l1 4v8zM16.500 14.500v-6l-2-6h-3l-1 4v8z" />
              <path d="M7.500 6.500h3v3h-3zM1.500 11.500h6M10.500 11.500h6" />
            </Draw>
          </IconButton>
          <IconButton>
            <Draw w={18} h={17} color="#222" fill="#eee">
              <ellipse cx="9" cy="5.500" rx="4" ry="5" />
              <path d="M1.500 15.500c0-3 3-4 6-4.500h3c3 .5 6 1.500 6 4.500z" />
            </Draw>
            &nbsp;Вход в службы
          </IconButton>
          <Arrow color="#aaa" w={5} />
          <IconButton aria-label="Autodesk Exchange">
            <Draw w={16} h={14} color="#9ec1ee" fill="#2456a0">
              <path d="M1 1h5l2 3 2-3h5l-4 6 4 6h-5L8 10l-2 3H1l4-6z" />
            </Draw>
          </IconButton>
          <IconButton aria-label="Обновления">
            <Draw w={18} h={17} color="#ccc">
              <path d="M6 6L3 13M7 6l3 4" />
              <circle cx="7" cy="4" r="2.500" />
              <circle cx="3" cy="13" r="2.500" />
              <path d="M7.500 7.500h9v9h-9z" fill="#e87817" stroke="#a84c06" />
              <path d="M12 9v5M9.500 12l2.500 3 2.500-3" stroke="#fff" strokeWidth="2" />
            </Draw>
          </IconButton>
          <Arrow color="#222" w={5} />
          <VRule />
          <IconButton aria-label="Справка">
            <svg width="17" height="17" viewBox="0 0 17 17" aria-hidden="true">
              <circle cx="8.500" cy="8.500" r="7.500" fill="#fff" stroke="#30425e" />
              <path d="M6 6.500c0-3 5.500-3 5.500 0 0 2-2.500 1.500-2.500 4M9 12v1.500" stroke="#234a94" strokeWidth="2" fill="none" />
            </svg>
          </IconButton>
          <Arrow color="#222" w={5} />
        </InfoBar>
        <WindowGlass>
          <WindowButtons>
            <WindowButton $grow={34} aria-label="Свернуть">
              <Draw w={12} h={5} color="#555" fill="#fff">
                <path d="M.5 .5h11v4H.500z" />
              </Draw>
            </WindowButton>
            <WindowButton $grow={22} aria-label="Окно">
              <Draw w={12} h={12} color="#555" fill="#fff">
                <path d="M3.500 .5h8v8h-8z" />
                <path d="M.5 3.500h8v8H.500zM3.500 6.500h2v2h-2z" />
              </Draw>
            </WindowButton>
            <WindowButton $grow={46} aria-label="Закрыть">
              <CloseX />
            </WindowButton>
          </WindowButtons>
        </WindowGlass>
      </TitleBar>
      <Tabs>
        <Tab $active>Главная</Tab>
        {["Вставка", "Аннотации", "Параметризация", "Вид", "Управление", "Вывод", "Подключаемые модули", "Активные приложения", "СПДС"].map(
          (t) => (
            <Tab key={t}>{t}</Tab>
          )
        )}
        <TabExtras aria-label="Свернуть ленту">
          <Draw w={13} h={7} color="none" fill="#c2c2c2">
            <rect width="13" height="7" rx="2" />
            <path d="M6.500 2l3 3h-6z" fill="#333" />
          </Draw>
          <Arrow color="#bbb" w={5} />
        </TabExtras>
      </Tabs>
    </HeaderRows>
  </Header>
);

const RibbonBar = () => (
  <Ribbon>
    <Panel title="Рисование" grow={261}>
      <Big label="Отрезок" w={51}><LineIcon /></Big>
      <Big label="Полилиния" w={71}><PolylineIcon /></Big>
      <Big label="Круг" w={46} arrow><CircleIcon /></Big>
      <Big label="Дуга" w={48} arrow><ArcIcon /></Big>
      <SmallColumn>
        <Split label="Прямоугольник"><RectIcon /></Split>
        <Split label="Эллипс"><EllipseIcon /></Split>
        <Split label="Штриховка"><HatchIcon /></Split>
      </SmallColumn>
    </Panel>
    <Panel title="Редактирование" grow={256}>
      <SmallColumn $w={102}>
        <TextTool><MoveIcon />Перенести</TextTool>
        <TextTool><CopyIcon />Копировать</TextTool>
        <TextTool><StretchIcon />Растянуть</TextTool>
      </SmallColumn>
      <SmallColumn $w={81}>
        <ToolButton aria-label="Повернуть"><RotateIcon /></ToolButton>
        <TextTool><MirrorIcon />Зеркало</TextTool>
        <ToolButton aria-label="Масштаб"><ScaleIcon /></ToolButton>
      </SmallColumn>
      <SmallColumn $w={41}>
        <Split label="Обрезать"><TrimIcon /></Split>
        <Split label="Сопряжение"><FilletIcon /></Split>
        <Split label="Массив"><ArrayIcon /></Split>
      </SmallColumn>
      <SmallColumn>
        <ToolButton aria-label="Стереть"><EraseIcon /></ToolButton>
        <ToolButton aria-label="Расчленить"><ExplodeIcon /></ToolButton>
        <ToolButton aria-label="Подобие"><OffsetIcon /></ToolButton>
      </SmallColumn>
    </Panel>
    <Panel title="Аннотации" grow={94}>
      <Big label="Текст" w={54} arrow><TextIcon /></Big>
      <SmallColumn>
        <Split label="Размер"><DimIcon /></Split>
        <Split label="Выноска"><LeaderIcon /></Split>
        <ToolButton aria-label="Таблица"><TableIcon /></ToolButton>
      </SmallColumn>
    </Panel>
    <Panel title="Слои" grow={214}>
      <SmallColumn $w={209}>
        <SmallRow $gap={4}>
          <ToolButton aria-label="Свойства слоя">
            <Layers extra={<path d="M9.500 8.500h7v8h-7zM11 10.500h4M11 13h4M11 15h4" fill="#fff" />} />
          </ToolButton>
          <ToolButton aria-label="Сделать текущим">
            <Layers extra={<circle cx="9" cy="3.500" r="2.500" fill="#fff" />} />
          </ToolButton>
          <SmallRow>
            <ToolButton aria-label="Копировать слой">
              <Layers extra={<path d="M9 13l5-4 2 2-3 5h-3z" fill="#bbb" />} />
            </ToolButton>
            <ToolButton data-joined aria-label="Предыдущий слой">
              <Draw>
                <path d="M1 2.500h6v3M3 .5l-2 2 2 2" stroke="#999" />
                <path d="M8 6.500h8l-3 3H5.500zM6 11l-1 1.500h8l3-3M6 14l-1 1.500h8l3-3" />
              </Draw>
            </ToolButton>
          </SmallRow>
          <SmallRow>
            <ToolButton aria-label="Изолировать">
              <Layers extra={<path d="M17 11l-4 4M13 12v3.500h3.500" stroke="#888" />} />
            </ToolButton>
            <ToolButton data-joined aria-label="Разъединить">
              <Layers extra={<path d="M12 16l4-4M13 12h3.500v3.500" stroke="#888" />} />
            </ToolButton>
          </SmallRow>
          <SmallRow>
            <ToolButton aria-label="Заморозить">
              <Draw>
                <path d="M5 3.500h9l-4 5H1z" />
                <circle cx="12.500" cy="12" r="3.500" strokeWidth="2" strokeDasharray="2 1" fill="#fff" />
              </Draw>
            </ToolButton>
            <ToolButton data-joined aria-label="Отключить">
              <Draw>
                <path d="M5 4.500h9l-4 5H1z" />
                <path d="M12 13c-3-6 6-6 3 0zM12.500 14v2.500h2V14" fill="#fff" />
              </Draw>
            </ToolButton>
          </SmallRow>
        </SmallRow>
        <Combo $small>
          <BareSelect aria-label="Конфигурация слоев">
            <option>Несохраненная конфигурация сло</option>
          </BareSelect>
          <Arrow />
        </Combo>
        <Combo>
          <BulbIcon />
          <SunIcon />
          <LockIcon />
          <Draw w={16} h={14} color="none" fill="#767676"><path d="M1 0h14v14H1z" /></Draw>
          <BareSelect aria-label="Слой">
            <option>0</option>
          </BareSelect>
          <Arrow />
        </Combo>
      </SmallColumn>
    </Panel>
    <Panel title="Блок" grow={96}>
      <Big label="Вставить" w={56}><BigInsertIcon /></Big>
      <SmallColumn>
        <ToolButton aria-label="Создать блок"><BlockIcon /></ToolButton>
        <ToolButton aria-label="Редактор блоков"><BlockIcon extra={<path d="M15 1l-4 4h3l-4 4" />} /></ToolButton>
        <Split label="Атрибуты">
          <Draw>
            <path d="M2 3.500l2 6 6 6 6-5-5-7zM5 6l2 2" fill="#f2f2f2" />
            <path d="M16 3l-8 7 1 2 8-8" fill="#ccc" />
          </Draw>
        </Split>
      </SmallColumn>
    </Panel>
    <Panel title="Свойства" grow={163} launcher>
      <SmallColumn $w={157}>
        <SmallRow $gap={1}>
          <Draw w={18} h={18} color="none">
            <circle cx="9" cy="9" r="8" fill="#bdbdbd" />
            <path d="M1 9a8 8 0 0 1 16 0L9 12z" fill="#d8d8d8" />
            <path d="M9 9l7 4a8 8 0 0 1-14 0z" fill="#a5a5a5" />
          </Draw>
          <Combo>
            <Swatch />
            <BareSelect aria-label="Цвет"><option>ПоСлою</option></BareSelect>
            <Arrow />
          </Combo>
        </SmallRow>
        <SmallRow $gap={1}>
          <Draw w={18} h={18} color="#999">
            <path d="M1 2.500h16" />
            <path d="M1 6h16" strokeWidth="2" />
            <path d="M1 10.500h16M1 15.500h16" strokeWidth="3" />
          </Draw>
          <Combo $color="#777">
            <LineSample $w={64} />
            <BareSelect aria-label="Вес линий"><option>ПоСлою</option></BareSelect>
            <Arrow />
          </Combo>
        </SmallRow>
        <SmallRow $gap={1}>
          <Draw w={18} h={18} color="#999">
            <path d="M1 3.500h16" strokeDasharray="2 1" />
            <path d="M1 7.500h16" strokeDasharray="4 1 1 1" />
            <path d="M1 11.500h16" strokeDasharray="3 1" />
            <path d="M1 15.500h16" strokeDasharray="6 2" />
          </Draw>
          <Combo $color="#777">
            <LineSample $w={64} />
            <BareSelect aria-label="Тип линий"><option>ПоСл...</option></BareSelect>
            <Arrow />
          </Combo>
        </SmallRow>
      </SmallColumn>
    </Panel>
    <Panel title="Утилиты" grow={105}>
      <Big label="Измерить" w={76} arrow><MeasureIcon /></Big>
      <SmallColumn>
        <ToolButton aria-label="Выбрать все"><SelectIcon /></ToolButton>
        <ToolButton aria-label="Быстрый выбор">
          <Draw>
            <circle cx="8" cy="6.500" r="4.500" />
            <path d="M1.500 7.500h7v6h-7z" fill="#f2f2f2" />
            <path d="M10 5v10l2.500-2 2 4 1.500-1-2-4h3z" fill="#eee" />
          </Draw>
        </ToolButton>
        <ToolButton aria-label="Калькулятор"><CalcIcon /></ToolButton>
      </SmallColumn>
    </Panel>
    <Panel title="Буфер обмена" grow={100} menu={false}>
      <Big label="Вставить" w={71} arrow><PasteIcon /></Big>
      <SmallColumn>
        <ToolButton aria-label="Вырезать"><CutIcon /></ToolButton>
        <ToolButton aria-label="Копировать в буфер"><CopyPageIcon /></ToolButton>
        <ToolButton aria-label="Копирование свойств"><MatchIcon /></ToolButton>
      </SmallColumn>
    </Panel>
    <Panel title="Группы" grow={74}>
      <Big label="Группа" w={46}><GroupIcon /></Big>
      <SmallColumn>
        <ToolButton aria-label="Разгруппировать"><GroupSmall extra={<path d="M16 4l-5 6-2 2 3-1 5-6z" fill="#ccc" />} /></ToolButton>
        <ToolButton aria-label="Редактировать группу"><GroupSmall extra={<path d="M12 5.500h5M14.500 3v5M12 12.500h5" />} /></ToolButton>
        <ToolButton $on aria-label="Выбор группы">
          <GroupSmall color="#6f8db0" extra={<path d="M11 4v9l2-1.500 2 4 1.500-1-2-3.500h3z" fill="#fff" />} />
        </ToolButton>
      </SmallColumn>
    </Panel>
  </Ribbon>
);

const LinetypeManager = () => (
  <Dialog $x={31} $y={21} $w={600} aria-label="Диспетчер типов линий">
    <DialogHead>
      <DialogTitle><AppLogo />Диспетчер типов линий</DialogTitle>
      <CloseButton aria-label="Закрыть"><CloseX /></CloseButton>
    </DialogHead>
    <DialogBody $pad="11px 10px 4px 8px">
      <FilterRow>
        <Fieldset>
          <Legend>Фильтры типов линий</Legend>
          <DialogSelectBox>
            <BareSelect aria-label="Фильтр"><option>Показать все типы линий</option></BareSelect>
            <Arrow color="#000" w={8} />
          </DialogSelectBox>
          <CheckLabel><CheckBox type="checkbox" />Инвертировать фильтр</CheckLabel>
        </Fieldset>
        <ButtonGrid>
          <DialogButton $w={70}>Загрузить...</DialogButton>
          <DialogButton $w={100}>Удалить</DialogButton>
          <DialogButton $w={70}>Текущий</DialogButton>
          <DialogButton $w={100}>Вкл подробности</DialogButton>
        </ButtonGrid>
      </FilterRow>
      <CurrentLine>Текущий тип линий:&nbsp; ПоСлою</CurrentLine>
      <ListFrame $h={266}>
        <Table $row={16}>
          <colgroup>
            <col width={150} />
            <col width={100} />
            <col width={250} />
            <col />
          </colgroup>
          <thead>
            <tr><th>Тип линий</th><th>Внешний вид</th><th>Описание</th><th /></tr>
          </thead>
          <tbody>
            <tr><td>ПоСлою</td><td><SampleLine /></td><td /><td /></tr>
            <tr><td>Поблоку</td><td><SampleLine /></td><td /><td /></tr>
            <tr><td>Continuous</td><td><SampleLine /></td><td>Continuous</td><td /></tr>
          </tbody>
        </Table>
      </ListFrame>
      <ButtonRow $gap={14} $justify="flex-end" $top={8}>
        <DialogButton>OK</DialogButton>
        <DialogButton>Отмена</DialogButton>
        <DialogButton>Справка</DialogButton>
      </ButtonRow>
    </DialogBody>
  </Dialog>
);

const LoadLinetypes = () => {
  const fileRef = useRef<HTMLInputElement>(null);
  useEffect(() => {
    fileRef.current?.focus();
    fileRef.current?.select();
  }, []);
  return (
    <Dialog $x={679} $y={51} $w={439} $active aria-label="Загрузка/перезагрузка типов линий">
      <DialogHead>
        <DialogTitle><AppLogo />Загрузка/перезагрузка типов линий</DialogTitle>
        <CloseButton $red aria-label="Закрыть"><CloseX light /></CloseButton>
      </DialogHead>
      <DialogBody $pad="8px 10px 6px 9px">
        <FileRow>
          <DialogButton>Файл...</DialogButton>
          <FileInput ref={fileRef} aria-label="Файл" defaultValue="acadiso.lin" />
        </FileRow>
        <ListLabel>Доступные типы линий</ListLabel>
        <ListFrame $h={179}>
          <ScrollGrid>
            <ScrollView>
              <Table $row={19}>
                <colgroup>
                  <col width={149} />
                  <col />
                </colgroup>
                <thead>
                  <tr><th>Тип линий</th><th>Описание</th></tr>
                </thead>
                <tbody>
                  {lineTypes.map(([name, text]) => (
                    <tr key={name}><td>{name}</td><td>{text}</td></tr>
                  ))}
                </tbody>
              </Table>
            </ScrollView>
            <VScroll>
              <ScrollArrow aria-label="Вверх"><Draw w={7} h={4} color="none" fill="#444"><path d="M3.500 0L7 4H0z" /></Draw></ScrollArrow>
              <Thumb $w={15} $h={16} />
              <ScrollArrow $push aria-label="Вниз"><Arrow color="#444" /></ScrollArrow>
            </VScroll>
            <HScroll>
              <ScrollArrow aria-label="Влево"><Draw w={4} h={7} color="none" fill="#222"><path d="M4 0v7L0 3.500z" /></Draw></ScrollArrow>
              <Thumb $w={267} $h={15}>
                <Draw w={8} h={7} color="#555"><path d="M.5 0v7M3.500 0v7M6.500 0v7" /></Draw>
              </Thumb>
              <ScrollArrow $push aria-label="Вправо"><Draw w={4} h={7} color="none" fill="#222"><path d="M0 0v7l4-3.500z" /></Draw></ScrollArrow>
            </HScroll>
          </ScrollGrid>
        </ListFrame>
        <ButtonRow $gap={17} $justify="center" $top={12}>
          <DialogButton $hot>OK</DialogButton>
          <DialogButton>Отмена</DialogButton>
          <DialogButton>Справка</DialogButton>
        </ButtonRow>
      </DialogBody>
      <Cursor>
        <Draw w={13} h={20} color="#000" fill="#fff">
          <path d="M1 1v15l3.500-3 2.500 6 2.500-1-2.500-6h5z" />
        </Draw>
      </Cursor>
    </Dialog>
  );
};

const Drawing = () => (
  <Canvas>
    <ViewLabel>[−][Верхняя][2D каркас]</ViewLabel>
    <ViewTools>
      <ViewControls>
        <IconButton aria-label="Свернуть вид">
          <Draw w={12} h={5} color="#666" fill="#fff"><path d="M.5 .5h11v4H.500z" /></Draw>
        </IconButton>
        <IconButton aria-label="Развернуть вид">
          <Draw w={13} h={13} color="#666" fill="#fff">
            <path d="M3.500 .5h9v9h-9z" />
            <path d="M.5 3.500h9v9H.500zM3.500 6.500h3v3h-3z" />
          </Draw>
        </IconButton>
        <IconButton aria-label="Закрыть вид"><CloseX /></IconButton>
      </ViewControls>
      <CubeWrap>
        <svg width="96" height="96" viewBox="0 0 96 96" fontFamily="Liberation Sans, Arial, sans-serif" textAnchor="middle" aria-hidden="true">
          <circle cx="48" cy="47" r="36" fill="none" stroke="#f9f9f9" strokeWidth="8" />
          <rect x="31.500" y="30.500" width="33" height="33" fill="#ececec" stroke="#8f8f8f" />
          <rect x="37" y="36" width="22" height="22" fill="#dfe0e6" />
          <text x="48" y="50" fontSize="10" fill="#8a8a8a">Верх</text>
          <g fontSize="14" fill="#b4b4b4">
            <text x="48" y="14">С</text>
            <text x="48" y="91">Ю</text>
            <text x="11" y="52">З</text>
            <text x="86" y="52">В</text>
          </g>
        </svg>
      </CubeWrap>
      <WcsButton>
        МСК
        <Draw w={10} h={5} color="#b4c0d4" fill="#fff"><path d="M1 .5h8L5 4.500z" /></Draw>
      </WcsButton>
      <NavBar>
        <NavEnd aria-label="Закрыть панель"><Draw w={8} h={8} color="#ddd"><circle cx="4" cy="4" r="3.500" /><path d="M2.500 2.500l3 3M5.500 2.500l-3 3" /></Draw></NavEnd>
        <Draw w={24} h={30} color="#d8d8d8">
          <path d="M12 4.500h11v11a11 11 0 1 1-11-11z" />
          <circle cx="12" cy="15" r="6" />
          <path d="M4 23l4-4M20 23l-4-4" />
        </Draw>
        <Arrow color="#d8d8d8" w={5} />
        <NavRule />
        <Draw w={24} h={24} color="#d2d2d2">
          <path d="M8 23c-1-4-6-6-7-10 2-1 4 1 5 3L4 5c2-2 3 1 4 7L9 2c2-2 3 0 3 9l2-9c2-1 3 1 2 10l3-7c2-1 3 1 2 4-1 6-2 10-4 14z" fill="#fff" />
        </Draw>
        <Draw w={24} h={24} color="#d2d2d2">
          <path d="M1 1l15 15M16 1L1 16M1 5V1h4M12 1h4v4M1 12v4h4" />
          <circle cx="16" cy="15" r="5" fill="#f4f4f4" />
          <path d="M19.500 18.500l4 4" strokeWidth="3" />
        </Draw>
        <Arrow color="#d8d8d8" w={5} />
        <Draw w={24} h={26} color="#d2d2d2">
          <path d="M12 2l4 6h-2v16h-4V8H8z" />
          <path d="M8 18l-6-3c-4-4 20-8 21 0 0 3-6 4-9 4M6 12l-4 3 5 4" strokeWidth="2" />
        </Draw>
        <Arrow color="#d8d8d8" w={5} />
        <NavRule />
        <Draw w={24} h={24} color="#d2d2d2">
          <path d="M.5 1.500h6v6h-6zM8.500 1.500h6v6h-6zM16.500 1.500h6v6h-6zM.5 10.500h16v12H.500z" />
          <path d="M6 13l6 4-6 4z" fill="#ccc" />
        </Draw>
        <NavEnd $last aria-label="Настройка панели навигации"><Draw w={8} h={8} color="#ddd"><circle cx="4" cy="4" r="3.500" /><path d="M2 4h4" /></Draw></NavEnd>
      </NavBar>
    </ViewTools>
    <UcsMark>
      <Draw w={76} h={73} color="#000">
        <path d="M5.500 18v48M6 67.500h50M1.500 62.500h9v9h-9z" />
        <path d="M7 1l6 6v6M19 1l-6 6M60 53l13 12M73 53L60 65" />
      </Draw>
    </UcsMark>
    <LinetypeManager />
    <LoadLinetypes />
  </Canvas>
);

const Slash = ({ back }: { back?: boolean }) => (
  <Draw w={8} h={16} color="#444" fill={back ? "#fff" : "none"}>
    <path d={back ? "M0 0l7 16" : "M0 16L7 0"} />
  </Draw>
);

const BottomBars = () => (
  <>
    <SheetBar>
      <SheetNav aria-label="Первый лист"><Draw w={9} h={9} color="#555" fill="#777"><path d="M1.500 1v7" /><path d="M8 1v7L3 4.500z" stroke="none" /></Draw></SheetNav>
      <SheetNav aria-label="Предыдущий лист"><Draw w={6} h={9} color="none" fill="#555"><path d="M6 1v7L1 4.500z" /></Draw></SheetNav>
      <SheetNav aria-label="Следующий лист"><Draw w={6} h={9} color="none" fill="#555"><path d="M0 1v7l5-3.500z" /></Draw></SheetNav>
      <SheetNav aria-label="Последний лист"><Draw w={9} h={9} color="#555" fill="#777"><path d="M7.500 1v7" /><path d="M1 1v7l5-3.500z" stroke="none" /></Draw></SheetNav>
      <Slash back />
      <SheetTab $active>Модель</SheetTab>
      <Slash />
      <SheetTab>Лист1</SheetTab>
      <Slash />
      <SheetTab>Лист2</SheetTab>
      <Slash />
    </SheetBar>
    <DarkBar />
    <CommandArea>
      <CommandGrip>
        <Draw w={17} h={6} color="#999" sw={2}>
          <path d="M0 1h17M0 5h17" strokeDasharray="2 1" />
        </Draw>
        <IconButton aria-label="Закрыть строку"><Draw w={10} h={10} color="#f0f0f0" sw={2}><path d="M1 1l8 8M9 1L1 9" /></Draw></IconButton>
        <IconButton aria-label="Настройка строки">
          <Draw w={15} h={15} color="#f0f0f0">
            <path d="M7 7l6 6" strokeWidth="3" />
            <path d="M4 1.500L6 4 4 6 1.500 4A4 4 0 0 0 7 8 4 4 0 0 0 4 1.500z" fill="#f0f0f0" />
          </Draw>
        </IconButton>
      </CommandGrip>
      <CommandRows>
        <CommandLog>Команда:</CommandLog>
        <CommandLine>
          <Draw w={15} h={14} color="#93a0ae" fill="#e4e9ee">
            <path d="M.5 .5h14v13H.500z" />
            <path d="M3 4l3.500 3L3 10M8 10.500h4" stroke="#333" fill="none" />
          </Draw>
          <Arrow color="#999" w={5} />
          <CommandInput aria-label="Команда" defaultValue="_LINETYPE" />
        </CommandLine>
      </CommandRows>
    </CommandArea>
    <StatusBar>
      <Coords>4181.9272, 2216.4549, 0.0000</Coords>
      <StatusButton aria-label="Вывод зависимостей"><Draw color="#222"><path d="M0 6.500h13M6.500 1v12M4.500 4.500h4v4h-4z" /><path d="M9 15.500h3v-4" stroke="#d8562a" strokeWidth="2" /><path d="M13 8.500h3v4h-3z" stroke="#2a62c8" strokeWidth="2" /></Draw></StatusButton>
      <StatusButton aria-label="Шаг"><Draw w={14} h={14} color="#222"><path d="M1 2.500h8M1 5.500h8M1 8.500h8M1 12.500h9" strokeDasharray="1 2" /><path d="M11.500 1v8M11.500 11v2" /></Draw></StatusButton>
      <StatusButton aria-label="Сетка"><Draw w={17} h={17} color="#333"><path d="M.5 .5h16v16H.500z" fill="#fff" /><path d="M3.500 0v17M6.500 0v17M9.500 0v17M12.500 0v17M0 3.500h17M0 6.500h17M0 9.500h17M0 12.500h17" /></Draw></StatusButton>
      <StatusButton aria-label="Орто"><Draw color="#333"><path d="M2.500 1v14.500H17M2.500 10.500h5v5" /></Draw></StatusButton>
      <StatusButton aria-label="Полярное отслеживание"><Draw w={14} h={14} color="#222"><path d="M11 10A5 5 0 1 1 9 3.500M5 9.500l7-8M5 9.500h8" /></Draw></StatusButton>
      <StatusButton $on aria-label="Привязка"><Draw color="#333"><path d="M3.500 3.500h13v12h-13z" fill="#fff" /><circle cx="3" cy="3" r="2" stroke="#e06428" fill="#fff" /></Draw></StatusButton>
      <StatusButton $on aria-label="3D привязка"><Draw color="#444"><path d="M4.500 4.500l3-3h9v9l-3 4h-9z" fill="#fff" /><path d="M4.500 4.500h9v10M13.500 4.500l3-3" stroke="#999" /><circle cx="4" cy="14" r="2" stroke="#e06428" fill="#fff" /></Draw></StatusButton>
      <StatusButton $on aria-label="Объектное отслеживание"><Draw w={14} h={12} color="#111"><path d="M12 1L2 10.500h11M7 6v4" /></Draw></StatusButton>
      <StatusButton $on aria-label="Динамическая ПСК"><Draw color="#333"><path d="M2.500 1v15.500H17M3 16L12 7M1 3l1.500-2L4 3M15 15l2 1.500" /><path d="M13 1l-3 5h3l-2 4 5-6h-2l2-3z" fill="#f8b62a" stroke="#e07818" /></Draw></StatusButton>
      <StatusButton $on aria-label="Динамический ввод"><Draw w={14} h={12} color="#111"><path d="M1 5.500h9M5.500 1v9" /><path d="M8 7h5v3H8z" strokeWidth="2" fill="#fff" /></Draw></StatusButton>
      <StatusButton aria-label="Вес линий"><Draw w={12} h={12} color="#111"><path d="M6 0v12" /><path d="M0 6h12" strokeWidth="2" /></Draw></StatusButton>
      <StatusButton $on aria-label="Прозрачность"><Draw w={17} h={17} color="#2465ae"><path d="M1 1h15v15H1z" fill="#bcdcf5" strokeWidth="2" /><path d="M2 3h13M2 7h13M2 11h13" strokeDasharray="2 2" stroke="#6ea6da" strokeWidth="2" /><path d="M4 5h11M4 9h11M4 13h11" strokeDasharray="2 2" stroke="#6ea6da" strokeWidth="2" /></Draw></StatusButton>
      <StatusButton aria-label="Быстрые свойства"><Draw w={9} h={12} color="#111"><path d="M.5 .5h8v11h-8z" fill="#fff" /><path d="M2 3.500h5M2 6h5M2 8.500h5" strokeDasharray="1 1 3" /></Draw></StatusButton>
      <StatusButton aria-label="Циклический выбор"><Draw color="#333"><path d="M0 4.500h8M4.500 0v8" /><path d="M6.500 5.500h8v8h-8z" stroke="#f4f4f4" strokeWidth="2" /><path d="M9.500 8.500h7v7h-7z" fill="#8dc06a" stroke="#2b6a18" /></Draw></StatusButton>
      <StatusButton aria-label="Монитор аннотаций"><Draw w={17} h={17} color="#333" fill="#fff"><path d="M5.500 .5h5v5h5v5h-5v5h-5v-5h-5v-5h5z" /></Draw></StatusButton>
      <StatusSpacer />
      <StatusGap $w={1} />
      <StatusButton $w={61}>РМОДЕЛЬ</StatusButton>
      <StatusButton aria-label="Лист"><Draw w={15} h={16} color="#222" fill="#fff"><path d="M1.500 .5h12v11h-12zM5 4v5h5zM0 14.500h15" /></Draw></StatusButton>
      <StatusButton aria-label="Просмотр листов"><Draw w={17} h={16} color="#222" fill="#fff"><path d="M.5 1.500h7v7h-7zM9.500 1.500h7v7h-7z" /><path d="M.5 11.500h16v2H.500z" fill="#555" /></Draw></StatusButton>
      <StatusGap $w={12} />
      <StatusButton $w={51}>
        <Draw w={16} h={16} color="#333" fill="#fff"><path d="M6.500 1.500h3v6l5 5-2 2-4.500-4-4.500 4-2-2 5-5z" /></Draw>
        1:1
        <Arrow color="#111" />
      </StatusButton>
      <StatusButton aria-label="Видимость аннотаций"><Draw w={18} h={16} color="#333" fill="#fff"><path d="M6.500 1.500h3v6l5 5-2 2-4.500-4-4.500 4-2-2 5-5z" /><circle cx="13" cy="9" r="3" stroke="#f08a20" fill="#ffe28a" /></Draw></StatusButton>
      <StatusButton aria-label="Автомасштаб"><Draw w={16} h={16} color="#888" fill="#c4c4c4"><path d="M6.500 1.500h3v6l5 5-2 2-4.500-4-4.500 4-2-2 5-5z" /><path d="M2 2l4 2-3 2z" /></Draw></StatusButton>
      <StatusGap $w={6} />
      <StatusButton aria-label="Рабочее пространство"><Draw w={17} h={17} color="#333"><circle cx="8.500" cy="8.500" r="7" fill="#fff" strokeWidth="2" strokeDasharray="3 2" /><circle cx="8.500" cy="8.500" r="5.500" fill="#fff" stroke="#fff" /><circle cx="8.500" cy="8.500" r="2.500" /></Draw></StatusButton>
      <StatusButton aria-label="Положение панелей"><Draw w={17} h={16} color="#333" fill="#fff"><path d="M1.500 7.500h9v7h-9zM6 10v3" /><path d="M8.500 7V4.500a3.500 3.500 0 0 1 7 0V7h-2V5a1.500 1.500 0 0 0-3 0v2" /></Draw></StatusButton>
      <StatusButton aria-label="Аппаратное ускорение"><Draw w={18} h={16} color="#555"><path d="M2.500 3.500h12v6h-12z" fill="#7f95a8" /><path d="M4.500 1v3M7.500 1v3M10.500 1v3M13.500 1v3M4.500 9v3M7.500 9v3" /><circle cx="14" cy="10.500" r="3" stroke="#f08a20" fill="#ffe28a" /><path d="M14 14v2" strokeWidth="2" /></Draw></StatusButton>
      <StatusButton $pressed $w={32} aria-label="Изоляция объектов"><Draw w={14} h={18} color="#777"><path d="M5 12C1.500 9 1.500 2 7 1.500 12.500 2 12.500 9 9 12z" fill="#fff6cc" /><path d="M5 14h4M5 16h4" stroke="#555" strokeWidth="2" /></Draw></StatusButton>
      <StatusButton $w={13} aria-label="Меню строки состояния"><Arrow color="#111" w={6} /></StatusButton>
      <StatusButton $w={20} aria-label="Очистить экран"><Draw w={15} h={15} color="#333" fill="#fff"><path d="M.5 1.500h14v12H.500z" /><path d="M1 3.500h13" stroke="#666" strokeWidth="3" /></Draw></StatusButton>
    </StatusBar>
    <TaskStrip />
  </>
);

export default function App() {
  return (
    <Page>
      <GlobalStyle />
      <TopBar />
      <RibbonBar />
      <DarkBar />
      <Drawing />
      <BottomBars />
    </Page>
  );
}
